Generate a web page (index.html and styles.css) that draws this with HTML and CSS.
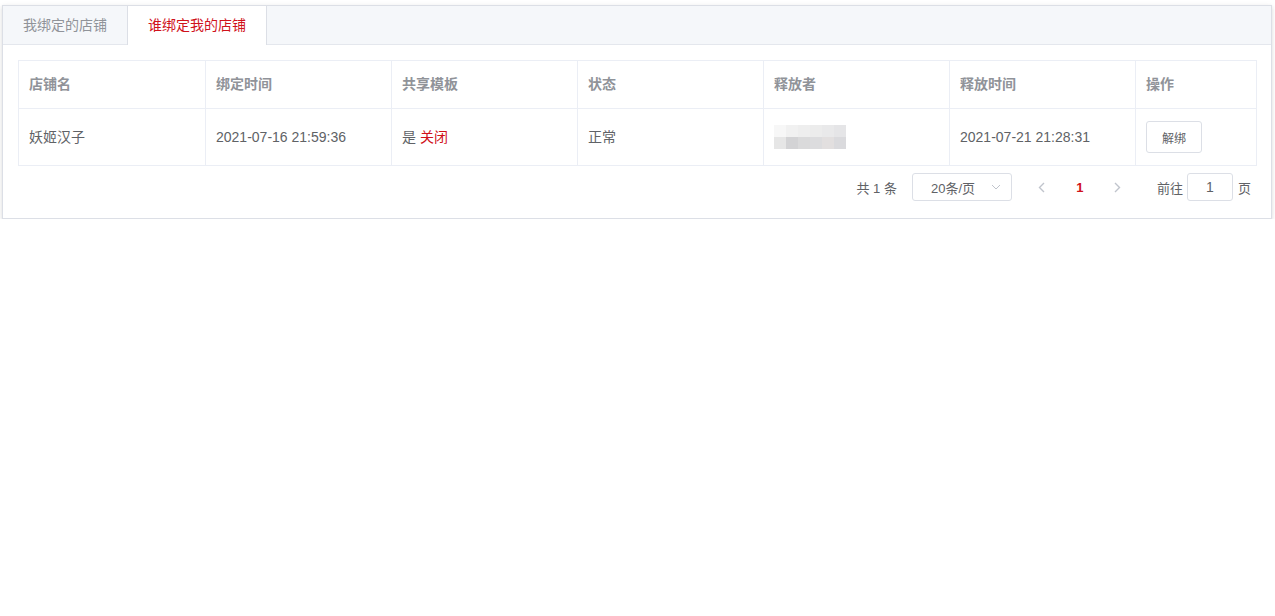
FILE: index.html
```html
<!DOCTYPE html>
<html lang="zh-CN">
<head>
    <meta charset="UTF-8">
    <title>店铺绑定</title>
    <link rel="stylesheet" href="styles.css">
</head>
<body>
    <div class="page">
        <div class="tabs-card">
            <div class="tabs-header">
                <div class="tab-item">我绑定的店铺</div>
                <div class="tab-item active">谁绑定我的店铺</div>
            </div>
            <div class="tabs-content">
                <table class="data-table">
                    <colgroup>
                        <col class="col-wide">
                        <col class="col-mid">
                        <col class="col-mid">
                        <col class="col-mid">
                        <col class="col-mid">
                        <col class="col-mid">
                        <col class="col-op">
                    </colgroup>
                    <thead>
                        <tr>
                            <th>店铺名</th>
                            <th>绑定时间</th>
                            <th>共享模板</th>
                            <th>状态</th>
                            <th>释放者</th>
                            <th>释放时间</th>
                            <th>操作</th>
                        </tr>
                    </thead>
                    <tbody>
                        <tr>
                            <td>妖姬汉子</td>
                            <td>2021-07-16 21:59:36</td>
                            <td>是 <span class="red">关闭</span></td>
                            <td>正常</td>
                            <td>
                                <div class="mosaic">
                                    <div class="mosaic-row top">
                                        <span class="m1"></span><span class="m2"></span><span class="m3"></span><span class="m4"></span><span class="m5"></span><span class="m6"></span>
                                    </div>
                                    <div class="mosaic-row bottom">
                                        <span class="m7"></span><span class="m8"></span><span class="m9"></span><span class="m10"></span><span class="m11"></span><span class="m12"></span>
                                    </div>
                                </div>
                            </td>
                            <td>2021-07-21 21:28:31</td>
                            <td><button class="btn-small">解绑</button></td>
                        </tr>
                    </tbody>
                </table>

                <div class="pagination">
                    <span class="total">共 1 条</span>
                    <div class="sizes">
                        <span>20条/页</span>
                        <svg class="caret" width="10" height="6" viewBox="0 0 10 6"><path d="M1 1 L5 5 L9 1" fill="none" stroke="#c0c4cc" stroke-width="1"/></svg>
                    </div>
                    <button class="btn-nav">
                        <svg width="7" height="11" viewBox="0 0 7 11"><path d="M6 1 L1.5 5.5 L6 10" fill="none" stroke="#c0c4cc" stroke-width="1.4"/></svg>
                    </button>
                    <span class="pager-num">1</span>
                    <button class="btn-nav">
                        <svg width="7" height="11" viewBox="0 0 7 11"><path d="M1 1 L5.5 5.5 L1 10" fill="none" stroke="#c0c4cc" stroke-width="1.4"/></svg>
                    </button>
                    <span class="jump">前往</span>
                    <div class="jump-input">1</div>
                    <span class="jump-unit">页</span>
                </div>
            </div>
        </div>
    </div>
</body>
</html>
```

FILE: styles.css
```css
body { margin: 0; background: #fff; font-family: "Liberation Sans", "Noto Sans CJK SC", sans-serif; color: #606266; }
.page { padding: 5px 3px 0 2px; }

.tabs-card { background: #fff; border: 1px solid #dcdfe6; box-shadow: 0 2px 4px rgba(0,0,0,.12), 0 0 6px rgba(0,0,0,.04); }
.tabs-header { display: flex; height: 38px; background: #f5f7fa; border-bottom: 1px solid #e4e7ed; }
.tab-item { height: 39px; line-height: 38px; padding: 0 20px; font-size: 14px; color: #909399; box-sizing: border-box; }
.tab-item.active { background: #fff; color: #d0121b; border-left: 1px solid #dcdfe6; border-right: 1px solid #dcdfe6; }

.tabs-content { padding: 15px 15px 17px; }

.data-table { width: 100%; table-layout: fixed; border-collapse: collapse; border: 1px solid #ebeef5; font-size: 14px; }
.col-wide { width: 187px; }
.col-mid { width: 186px; }
.col-op { width: 121px; }
.data-table th, .data-table td { border: 1px solid #ebeef5; text-align: left; padding: 12px 10px; line-height: 23px; }
.data-table th { color: #909399; font-weight: bold; height: 23px; }
.data-table td { color: #606266; height: 32px; }
.red { color: #d0121b; }

.mosaic { width: 72px; }
.mosaic-row { display: flex; height: 12px; }
.mosaic-row span { flex: 1; }
.top .m1 { background: #f7f7f7; } .top .m2 { background: #f1f1f1; } .top .m3 { background: #eeeeee; }
.top .m4 { background: #ececec; } .top .m5 { background: #e9e9ea; } .top .m6 { background: #e5e5e7; }
.bottom .m7 { background: #e6e6e6; } .bottom .m8 { background: #d3d3d5; } .bottom .m9 { background: #dadadb; }
.bottom .m10 { background: #dcdcde; } .bottom .m11 { background: #e2dfdf; } .bottom .m12 { background: #dadadd; }

.btn-small { height: 32px; padding: 0 15px; font-size: 12px; font-family: inherit; color: #606266; background: #fff; border: 1px solid #dcdfe6; border-radius: 3px; }

.pagination { display: flex; justify-content: flex-end; align-items: center; height: 28px; margin-top: 7px; padding-right: 5px; font-size: 13px; color: #606266; }
.total { margin-right: 15px; }
.sizes { width: 100px; height: 28px; box-sizing: border-box; border: 1px solid #dcdfe6; border-radius: 3px; display: flex; align-items: center; padding: 0 10px 0 18px; margin-right: 15px; }
.sizes span { flex: 1; }
.btn-nav { width: 30px; height: 28px; border: none; background: none; padding: 0; display: flex; align-items: center; justify-content: center; }
.pager-num { width: 46px; text-align: center; color: #d0121b; font-weight: bold; }
.jump { margin-left: 24px; margin-right: 4px; }
.jump-input { width: 46px; height: 28px; box-sizing: border-box; border: 1px solid #dcdfe6; border-radius: 3px; text-align: center; line-height: 26px; font-size: 14px; }
.jump-unit { margin-left: 5px; }
```
